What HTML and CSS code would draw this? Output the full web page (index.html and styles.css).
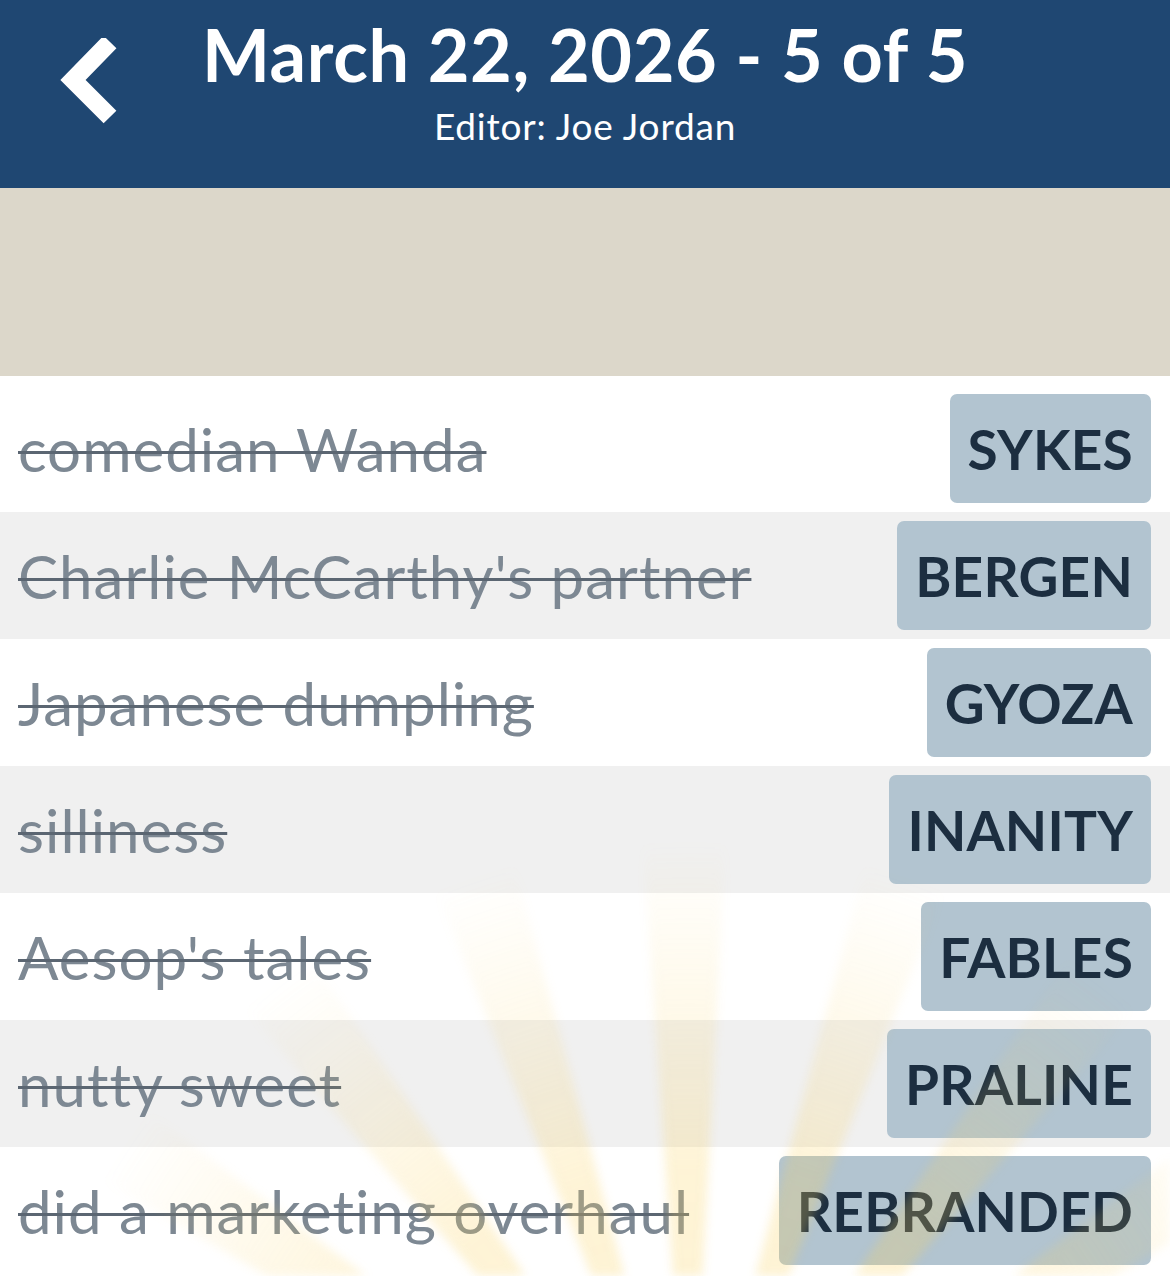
FILE: index.html
```html
<!DOCTYPE html>
<html lang="en">
<head>
<meta charset="utf-8">
<title>March 22, 2026 - 5 of 5</title>
<link rel="stylesheet" href="styles.css">
</head>
<body>
<div class="page">
  <header class="topbar">
    <button class="back" aria-label="Back">
      <svg width="70" height="100" viewBox="0 0 70 100" aria-hidden="true">
        <polyline points="50,4 13,42 50,79" fill="none" stroke="#ffffff" stroke-width="18" stroke-linejoin="miter" stroke-linecap="butt"/>
      </svg>
    </button>
    <div class="titles">
      <h1 class="title">March 22, 2026 - 5 of 5</h1>
      <p class="subtitle">Editor: Joe Jordan</p>
    </div>
    <div class="spacer"></div>
  </header>
  <div class="banner"></div>
  <ul class="clues">
    <li class="row"><span class="clue">comedian Wanda</span><span class="answer">SYKES</span></li>
    <li class="row alt"><span class="clue">Charlie McCarthy's partner</span><span class="answer">BERGEN</span></li>
    <li class="row"><span class="clue">Japanese dumpling</span><span class="answer">GYOZA</span></li>
    <li class="row alt"><span class="clue">silliness</span><span class="answer">INANITY</span></li>
    <li class="row"><span class="clue">Aesop's tales</span><span class="answer">FABLES</span></li>
    <li class="row alt"><span class="clue">nutty sweet</span><span class="answer">PRALINE</span></li>
    <li class="row"><span class="clue">did a marketing overhaul</span><span class="answer">REBRANDED</span></li>
  </ul>
  <div class="rays" aria-hidden="true"></div>
</div>
</body>
</html>
```
FILE: styles.css
```css
* { box-sizing: border-box; }
html, body { margin: 0; padding: 0; }
body {
  background: #ffffff;
  font-family: "Lato", "Noto Sans", "Liberation Sans", sans-serif;
  width: 1170px;
  height: 1276px;
  overflow: hidden;
}
.page {
  position: relative;
  width: 1170px;
  height: 1276px;
  overflow: hidden;
}
.topbar {
  height: 188px;
  background: #1f4772;
  display: grid;
  grid-template-columns: 1fr auto 1fr;
  align-items: start;
}
.back {
  justify-self: start;
  margin: 38px 0 0 60px;
  padding: 0;
  border: 0;
  background: none;
  width: 70px;
  height: 100px;
  cursor: pointer;
}
.back svg { display: block; }
.titles {
  text-align: center;
  color: #ffffff;
  padding-top: 13px;
}
.title {
  margin: 0;
  font-size: 72px;
  line-height: 82px;
  font-weight: 700;
  letter-spacing: 0.6px;
  white-space: nowrap;
}
.subtitle {
  margin: 9px 0 0;
  font-size: 37px;
  line-height: 44px;
  font-weight: 400;
  letter-spacing: 0.8px;
}
.banner {
  height: 188px;
  background: #dcd7ca;
}
.clues {
  list-style: none;
  margin: 0;
  padding: 9px 0 0;
}
.row {
  height: 127px;
  display: flex;
  align-items: center;
  justify-content: space-between;
  padding: 0 19px 0 18px;
  background: #ffffff;
}
.row.alt { background: #f0f0f0; }
.clue {
  font-size: 60px;
  letter-spacing: 1px;
  color: #7d8893;
  text-decoration: line-through;
  text-decoration-color: #5b6672;
  text-decoration-thickness: 3px;
  white-space: nowrap;
}
.answer {
  height: 109px;
  display: flex;
  align-items: center;
  padding: 0 18px;
  border-radius: 7px;
  background: #b2c4d0;
  color: #1c2e40;
  font-size: 55px;
  letter-spacing: 0.2px;
  font-weight: 700;
  white-space: nowrap;
}
.rays {
  position: absolute;
  left: 0;
  top: 0;
  width: 1170px;
  height: 1276px;
  pointer-events: none;
  filter: blur(5px);
  background: repeating-conic-gradient(from -4deg at 690px 1520px,
    rgba(250, 210, 95, 0.30) 0deg 7deg,
    rgba(250, 210, 95, 0) 7deg 19deg);
  -webkit-mask-image: radial-gradient(circle at 690px 1520px, rgba(0,0,0,1) 0px, rgba(0,0,0,0.85) 350px, rgba(0,0,0,0) 680px);
  mask-image: radial-gradient(circle at 690px 1520px, rgba(0,0,0,1) 0px, rgba(0,0,0,0.85) 350px, rgba(0,0,0,0) 680px);
}
```
